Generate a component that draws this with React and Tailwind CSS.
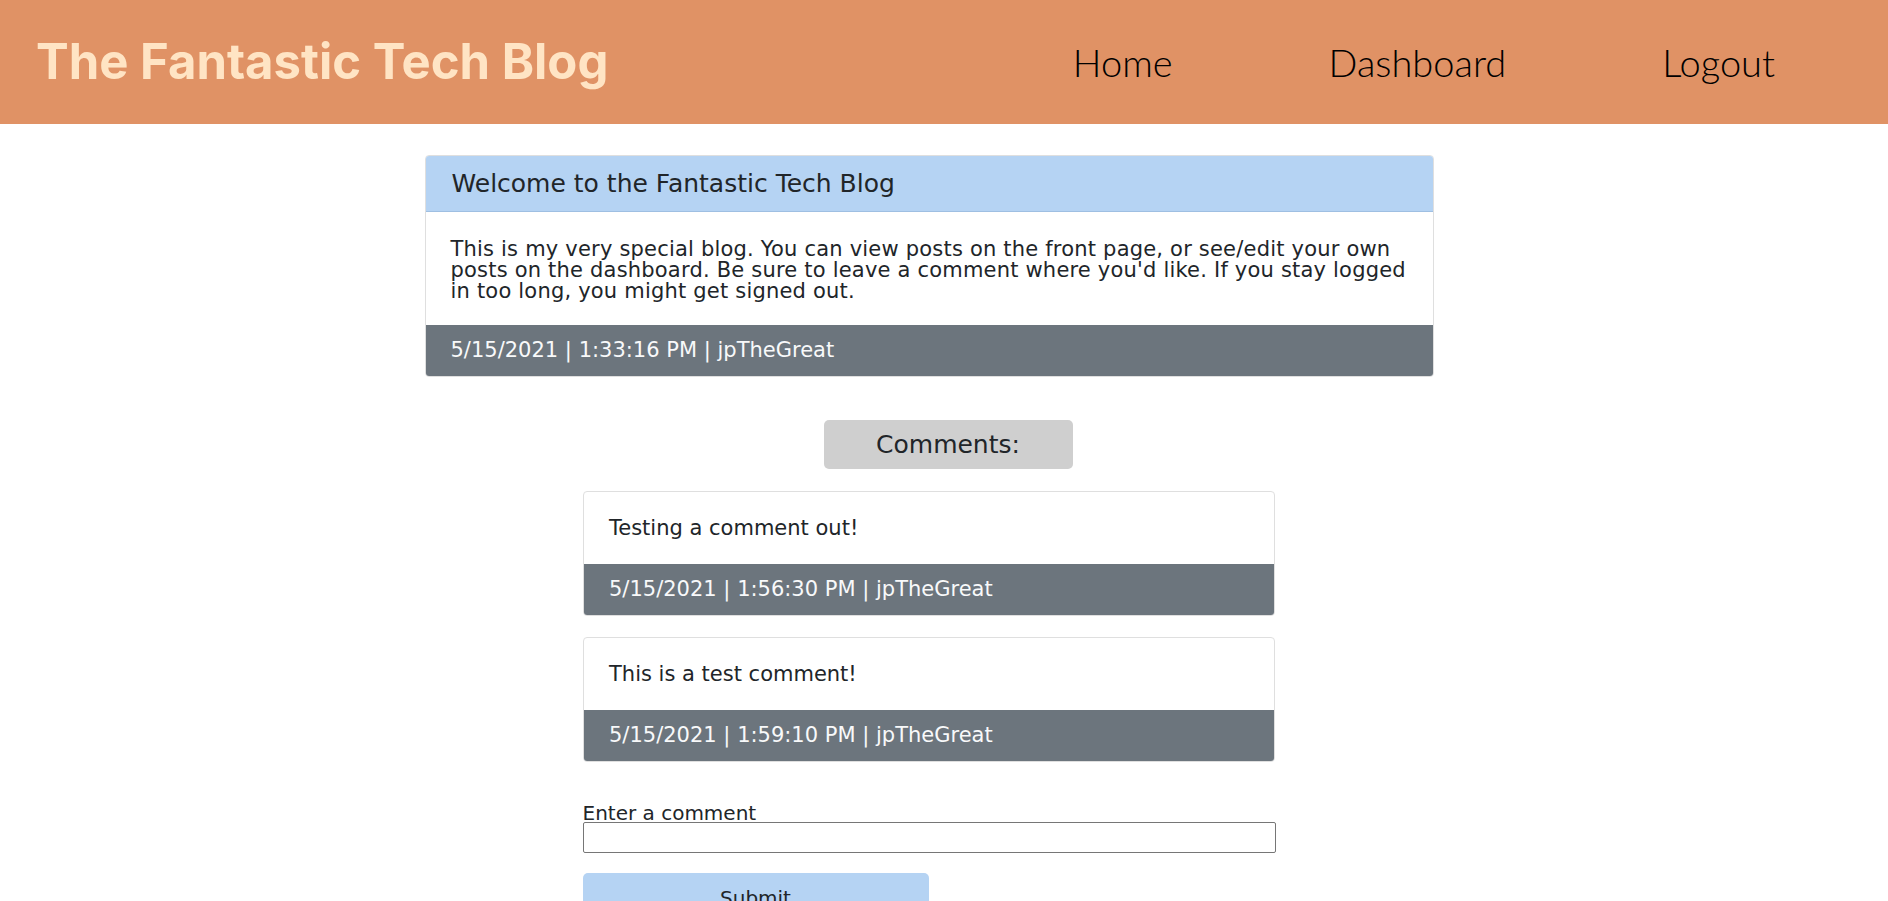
import React from "react";

const body = { fontFamily: '"DejaVu Sans", Verdana, sans-serif' };

const comments = [
  { text: "Testing a comment out!", date: "5/15/2021", time: "1:56:30 PM", user: "jpTheGreat" },
  { text: "This is a test comment!", date: "5/15/2021", time: "1:59:10 PM", user: "jpTheGreat" },
];

const MetaBar = ({ date, time, user }) => (
  <div className="h-[51px] flex items-center px-[25px] bg-[#6c757d] text-[#f8f9fa] text-[21px]">
    {date} | {time} | {user}
  </div>
);

const CommentCard = ({ comment }) => (
  <div className="w-[692px] border border-[#dfdfdf] rounded-[4px] overflow-hidden bg-white">
    <p className="px-[25px] py-[25px] text-[21px] leading-[22px] text-[#212529]">{comment.text}</p>
    <MetaBar date={comment.date} time={comment.time} user={comment.user} />
  </div>
);

export default function App() {
  return (
    <div className="min-h-screen bg-white" style={body}>
      {/* header */}
      <header className="h-[124px] bg-[#e09265] flex items-center justify-between pl-[36px] pr-[113px]">
        <h1
          className="text-[#ffe4c4] text-[49px] font-bold"
          style={{ fontFamily: 'Inter, "Open Sans", sans-serif' }}
        >
          The Fantastic Tech Blog
        </h1>
        <nav
          className="flex items-center gap-[156px] text-[38px] font-light text-black"
          style={{ fontFamily: 'Lato, sans-serif' }}
        >
          <a href="#">Home</a>
          <a href="#">Dashboard</a>
          <a href="#">Logout</a>
        </nav>
      </header>

      <main className="flex flex-col items-center pr-[30px] pt-[31px]">
        {/* post */}
        <div className="w-[1009px] border border-[#dfdfdf] rounded-[4px] overflow-hidden">
          <div className="h-[56px] flex items-center px-[26px] bg-[#b5d3f3] border-b border-[#9fbfe2] text-[25px] text-[#212529]">
            Welcome to the Fantastic Tech Blog
          </div>
          <p className="px-[25px] pt-[27px] pb-[23px] text-[21px] leading-[21px] tracking-[0.2px] whitespace-nowrap text-[#212529]">
            This is my very special blog. You can view posts on the front page, or see/edit your own
            <br />
            posts on the dashboard. Be sure to leave a comment where you'd like. If you stay logged
            <br />
            in too long, you might get signed out.
          </p>
          <MetaBar date="5/15/2021" time="1:33:16 PM" user="jpTheGreat" />
        </div>

        <div className="mt-[43px] ml-[38px] w-[249px] h-[49px] flex items-center justify-center bg-[#cfcfcf] rounded-[5px] text-[25px] text-[#212529]">
          Comments:
        </div>

        <div className="mt-[22px] flex flex-col gap-[21px]">
          {comments.map((c, i) => (
            <CommentCard key={i} comment={c} />
          ))}
        </div>

        {/* new comment */}
        <form className="mt-[42px] w-[693px] flex flex-col" onSubmit={(e) => e.preventDefault()}>
          <label htmlFor="comment" className="text-[20px] leading-[18px] text-[#212529]">
            Enter a comment
          </label>
          <input
            id="comment"
            type="text"
            className="h-[31px] border border-[#767676] rounded-[2px] bg-white"
          />
          <button
            type="submit"
            className="mt-[20px] w-[346px] pt-[10px] pb-[16px] rounded-[5px] bg-[#b5d3f3] text-[20px] text-[#212529]"
          >
            Submit
          </button>
        </form>
      </main>
    </div>
  );
}
